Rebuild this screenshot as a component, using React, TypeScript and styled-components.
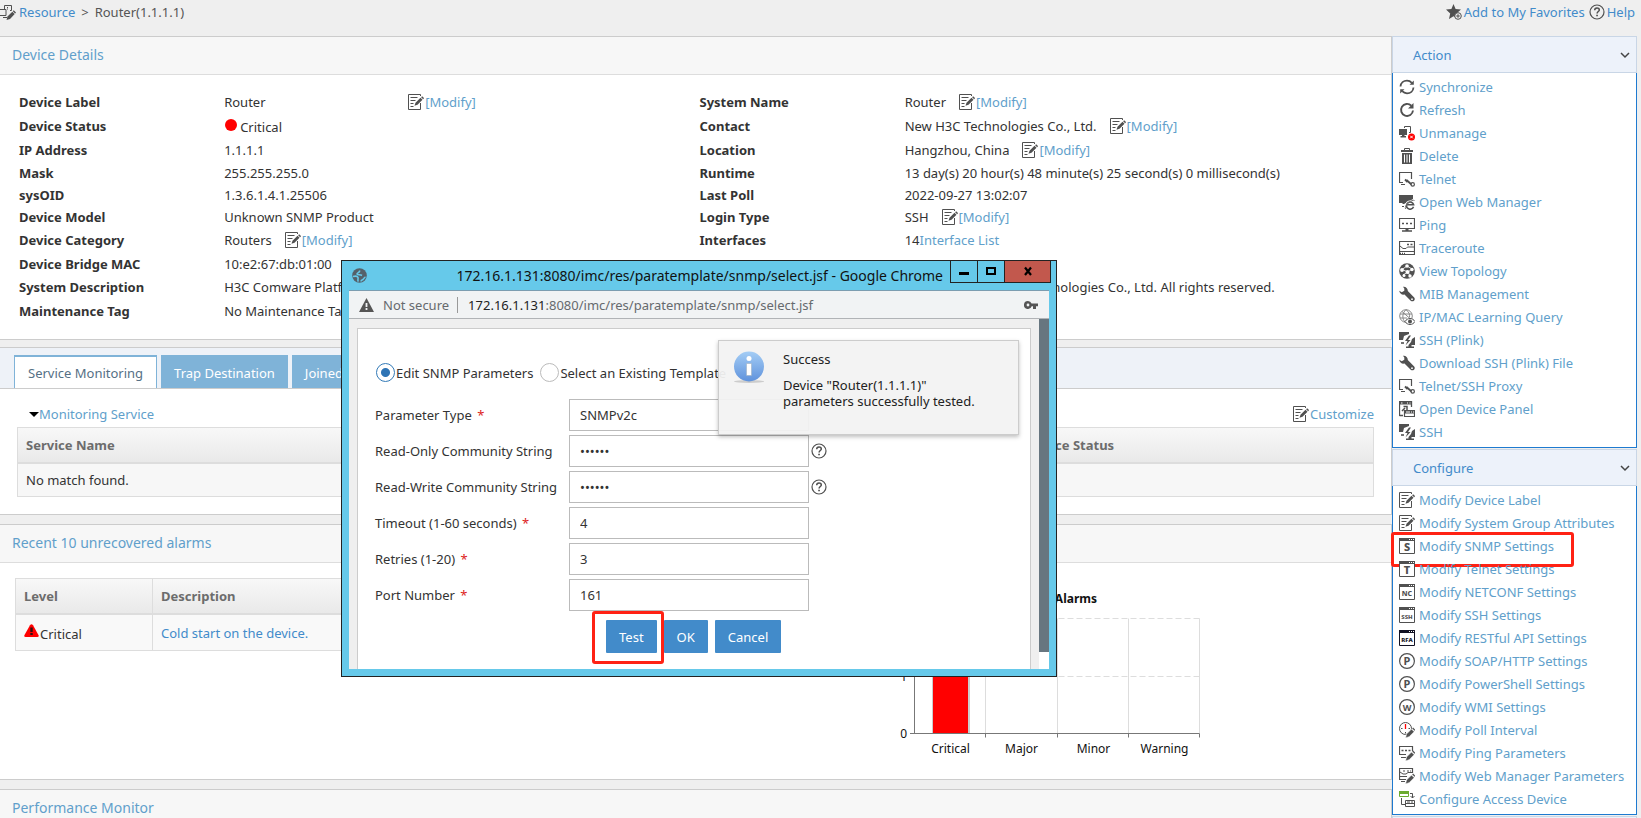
import React, { ReactNode } from 'react';
import styled, { createGlobalStyle, css } from 'styled-components';

const GlobalStyle = createGlobalStyle`
  *, *::before, *::after { box-sizing: border-box; }
  body {
    margin: 0;
    background: #efefef;
    color: #333;
    font: 13px/22px "Noto Sans", "Open Sans", sans-serif;
  }
  a { color: #619fcb; text-decoration: none; }
  button, input, select { font: inherit; color: inherit; }
`;

/* ---------- icons ---------- */

const INK = '#505050';

const Glyph = styled.svg`
  flex: none;
  width: 16px;
  height: 16px;
  display: block;
`;

const Icon = ({ children }: { children: ReactNode }) => (
  <Glyph viewBox="0 0 16 16" fill="none" stroke={INK} aria-hidden="true">
    {children}
  </Glyph>
);

const EditIcon = () => (
  <Icon>
    <path d="M12.5 2V.5H.5v15h12V9" />
    <path d="M2.500 3.500h7M2.500 6.500h5M2.500 9.500h3M2.500 12.500h3" />
    <path d="M6.500 11.800l1-3 5-5 2 2-5 5z" fill={INK} stroke="none" />
    <path d="M13.100 3.200l1-1 2 2-1 1z" fill={INK} stroke="none" />
  </Icon>
);

const CrumbIcon = () => (
  <Icon>
    <path d="M4.500 5V1.500h7v5H10M3 13.500h4M-2 5.500h8v6h-8z" />
    <path d="M7.500 4.500v1M7 3.500h1" />
    <path d="M6.500 16l1-3.500 4.800-4.800 2.400 2.400L10 15z" fill={INK} stroke="none" />
    <path d="M12.800 7.200l.9-.9 2.300 2.300-.9.9z" fill={INK} stroke="none" />
  </Icon>
);

const StarIcon = () => (
  <Icon>
    <path d="M7.500 0l2.100 5 5.400.4-4 3.500 1 3.600-1.600 1.600L7.500 12.300 3 15l1.200-5.500L0 5.500 5.400 5z" fill={INK} stroke="none" />
    <circle cx="12" cy="12" r="3.300" fill="#efefef" />
    <path d="M10.200 12h3.600M12 10.200v3.600" />
  </Icon>
);

const HelpIcon = () => (
  <Icon>
    <circle cx="8" cy="8" r="7" strokeWidth="1.200" />
    <path d="M5.700 6.200c0-1.500 1-2.300 2.300-2.300s2.300.8 2.300 2c0 1.600-2.200 1.700-2.200 3.600" strokeWidth="1.500" />
    <path d="M7.200 10.800h1.700v1.500H7.200z" fill={INK} stroke="none" />
  </Icon>
);

const SyncIcon = () => (
  <Icon>
    <path d="M1.500 7.500C1.800 4 4.600 1.700 8 1.700c2 0 3.600.8 4.800 2.100M14.500 8.500c-.3 3.500-3.100 5.800-6.500 5.800-2 0-3.600-.8-4.800-2.100" strokeWidth="1.800" />
    <path d="M14.800 1.500v4.300h-4.300zM1.200 14.500v-4.300h4.300z" fill={INK} stroke="none" />
  </Icon>
);

const RefreshIcon = () => (
  <Icon>
    <path d="M12.300 3.700A6 6 0 1 0 14 8.500" strokeWidth="1.900" />
    <path d="M14.500 1v5.500H9z" fill={INK} stroke="none" />
  </Icon>
);

const UnmanageIcon = () => (
  <Icon>
    <path d="M5.500 3V1.500h6v6H10" />
    <path d="M0 4h8v6H5.500v1H7v1.500H1.500V11H3v-1H0z" fill={INK} stroke="none" />
    <circle cx="12.500" cy="12" r="3.500" fill="#f00" stroke="none" />
    <path d="M11.200 10.700l2.600 2.600M13.800 10.700l-2.600 2.600" stroke="#fff" />
  </Icon>
);

const TrashIcon = () => (
  <Icon>
    <path d="M5.500 2.500v-2h5v2" />
    <path d="M2 2h12v2H2zM3 5h10v11H3z" fill={INK} stroke="none" />
    <path d="M5.500 6.500v8M8 6.500v8M10.500 6.500v8" stroke="#fff" />
  </Icon>
);

const TelnetIcon = () => (
  <Icon>
    <path d="M4 11.500H.5v-10h12V8M2 13.500h4" strokeWidth="1.200" />
    <path d="M6 8.500l2.500 2.500M7.500 9l5 4.500" strokeWidth="1.800" />
    <circle cx="13.700" cy="13.400" r="1.700" strokeWidth="1.200" />
  </Icon>
);

const WebIcon = () => (
  <Icon>
    <path d="M0 1h14v4L5 10H3.500V9H0z" fill={INK} stroke="none" />
    <path d="M3 12.500h2" />
    <circle cx="11" cy="11" r="4.600" fill="#fff" stroke="none" />
    <path d="M14.500 12.800A3.600 3.600 0 1 1 14.600 10.800H8" strokeWidth="1.600" />
    <path d="M15.500 6.500C13 5 5 11 6.500 15" stroke="#777" />
  </Icon>
);

const PingIcon = () => (
  <Icon>
    <path d="M.5 1.500h15v10H.5z" strokeWidth="1.200" />
    <path d="M3 6.500h2M7 6.500h2M11 6.500h2" strokeWidth="1.500" />
    <path d="M3 14h10M6.500 12.500h3" strokeWidth="1.500" />
  </Icon>
);

const TraceIcon = () => (
  <Icon>
    <path d="M.5 1.500h15v13H.5zM1 11.500h14" strokeWidth="1.200" />
    <path d="M1 6l3 2.500h3L8.500 7H15" />
    <path d="M8 4.500h2M11.500 4.500h2" strokeWidth="1.500" />
    <path d="M1 13.500h1M3 13.500h1M5 13.500h1" strokeWidth="1.500" />
  </Icon>
);

const TopologyIcon = () => (
  <Icon>
    <circle cx="8" cy="8" r="7.800" fill={INK} stroke="none" />
    <path d="M8 3l5 3-4 3 2 4M8 3L3 6.500l6 2.500-5 3" stroke="#fff" strokeWidth=".8" />
    <g fill="#fff" stroke="none">
      <circle cx="8" cy="3" r="1.800" />
      <circle cx="13" cy="6.500" r="1.700" />
      <circle cx="3" cy="7" r="1.900" />
      <circle cx="8.500" cy="9" r="2" />
      <circle cx="11" cy="13" r="1.700" />
      <circle cx="5" cy="12.500" r="1.500" />
    </g>
  </Icon>
);

const WrenchIcon = () => (
  <Icon>
    <path d="M4 .8c2.600-.5 5 1.500 4.800 4.200l6.400 6.500c1.800 2.500-1.300 5-3.500 3.300L5.500 8.600C3 9.200.5 7.500.2 4.800l2.600 1.500 2.500-1.500V2.500z" fill={INK} stroke="none" />
    <circle cx="13" cy="13.200" r=".9" fill="#fff" stroke="none" />
  </Icon>
);

const GlobeEyeIcon = () => (
  <Icon>
    <g stroke="#888">
      <circle cx="7" cy="7" r="6.300" />
      <path d="M1 5h12M1 9h7M7 .7C3 4 3 10 6 13M7 .7c3 2 4 5 3.500 7.500M3 2.500l8 7" />
    </g>
    <path d="M6 12.500c2.500-4 7.500-4 10 0-2.500 4-7.500 4-10 0z" fill="#fff" stroke={INK} />
    <circle cx="11" cy="12.500" r="2" fill={INK} stroke="none" />
  </Icon>
);

const SshIcon = () => (
  <Icon>
    <path d="M0 0h10v2L5 4 4 8H0z" fill={INK} stroke="none" />
    <path d="M2 11h3" strokeWidth="1.600" />
    <path d="M16 5v8h-3.500v1.500H15V16H7v-1.500h2.500V13L12 10l1-3z" fill={INK} stroke="none" />
    <path d="M10 3.500L6 9h2.500L6.500 13.500 11.500 8H9l3-4.500z" fill={INK} stroke="none" />
  </Icon>
);

const PanelIcon = () => (
  <Icon>
    <path d="M.5 15V.5h12V6M.5 14.500H4" strokeWidth="1.300" />
    <path d="M0 0h13v3.500H0z" fill={INK} stroke="none" />
    <path d="M2 2h1.500M8 2h1M10.500 2h1" stroke="#fff" />
    <path d="M3 10l3-3M4.500 5.500H8V9" strokeWidth="1.500" />
    <path d="M5.500 9.500h10v6h-10z" fill="#fff" strokeWidth="1.200" />
    <path d="M5 9h11v3.500H5z" fill={INK} stroke="none" />
    <path d="M7 11h4M12 11h1M14 11h1" stroke="#fff" />
  </Icon>
);

const SocketIcon = ({ text, size, ink = INK }: { text: string; size: number; ink?: string }) => (
  <Icon>
    <path d="M.5.500h15v15H.5z" stroke={ink} fill="#fff" />
    <path d="M0 0h16v3H0z" fill={ink} stroke="none" />
    <path d="M10 1.500h1M12 1.500h1M14 1.500h1" stroke="#fff" />
    <text x="8" y={size > 7 ? 13 : 12} fontSize={size} fontWeight="800" textAnchor="middle" fill={ink} stroke="none">
      {text}
    </text>
  </Icon>
);

const LetterIcon = ({ text }: { text: string }) => (
  <Icon>
    <circle cx="8" cy="8" r="7.400" strokeWidth="1.200" />
    <text x="8" y="11.800" fontSize={text === 'W' ? 9 : 11} fontWeight="700" textAnchor="middle" fill={INK} stroke="none">
      {text}
    </text>
  </Icon>
);

const Pencil = () => (
  <>
    <path d="M6.500 16l1-4 5-5 2.700 2.700-5 5z" fill={INK} stroke="#fff" strokeWidth=".6" />
    <path d="M13.200 6.500l.9-.9 2.300 2.300-.9.9z" fill={INK} stroke="none" />
  </>
);

const PollIcon = () => (
  <Icon>
    <circle cx="6.500" cy="6.500" r="6" />
    <path d="M6.500 2v5" stroke="#f00" strokeWidth="1.300" />
    <path d="M2 6.500h1.500M9.500 6.500H11M6.500 10v1.500" />
    <Pencil />
  </Icon>
);

const PingEditIcon = () => (
  <Icon>
    <path d="M7 9.500H.5v-8h13V6M2 12.500h5" strokeWidth="1.200" />
    <path d="M2.500 5.500h2M6 5.500h2M9.500 5.500h2" strokeWidth="1.500" />
    <Pencil />
  </Icon>
);

const WebEditIcon = () => (
  <Icon>
    <path d="M7 11.500H.5V.5h13V5M1 8.500h7M2 13.500h4" strokeWidth="1.200" />
    <path d="M1 4l3 2h3l2-1.500h4M4 3h2M8 3h2M11 3h1" />
    <Pencil />
  </Icon>
);

const AccessIcon = () => (
  <Icon>
    <path d="M.5.500h9v5h-9z" stroke="#6cab2f" />
    <path d="M0 0h10v3H0z" fill="#6cab2f" stroke="none" />
    <path d="M2.500 7v6.500H6M11 2.500h2.500V7M11.500 5l2 2 2-2" />
    <path d="M6.500 9.500h9v6h-9zM6.500 12.500h9M8 11h3M12 11h2" />
  </Icon>
);

const Chevron = () => (
  <Glyph viewBox="0 0 16 16" fill="none" stroke="#444" strokeWidth="1.500" aria-hidden="true">
    <path d="M4 6l4 4 4-4" />
  </Glyph>
);

/* ---------- page frame ---------- */

const Page = styled.div`
  position: relative;
  height: 100vh;
  overflow: hidden;
`;

const TopBar = styled.header`
  display: flex;
  justify-content: space-between;
  height: 36px;
  padding-right: 6px;
  color: #555;
  a { color: #428bca; }
`;

const TopGroup = styled.nav`
  display: flex;
  align-items: center;
  height: 24px;
`;

const IconLink = styled.a`
  display: inline-flex;
  align-items: center;
  ${Glyph} { margin-right: 1px; }
`;

const Crumb = styled(IconLink)`
  ${Glyph} { margin-right: 3px; }
`;

const TopLink = styled(IconLink)`
  margin-left: 4px;
  ${Glyph} { margin-right: 2px; }
`;

const CrumbSep = styled.span`
  margin: 0 6px;
`;

const Columns = styled.div`
  display: flex;
  align-items: flex-start;
  padding-right: 4px;
`;

const Main = styled.main`
  flex: 1;
  min-width: 0;
`;

const Panel = styled.section<{ $gap?: number }>`
  background: #fff;
  border: solid #ccc;
  border-width: 1px 1px 1px 0;
  margin-bottom: ${p => p.$gap ?? 9}px;
`;

const PanelTitle = styled.h2`
  margin: 0;
  padding: 4px 12px 0;
  height: 38px;
  background: #f7f7f7;
  border-bottom: 1px solid #ddd;
  color: #619fcb;
  font-size: 14px;
  font-weight: 400;
  line-height: 28px;
`;

/* ---------- device details ---------- */

const DetailsBody = styled.div`
  padding: 15px 11px 16px 19px;
`;

const DetailsTable = styled.table`
  width: 100%;
  table-layout: fixed;
  border-collapse: collapse;
  th, td { padding: 0; text-align: left; white-space: nowrap; }
  td { padding-left: 1px; }
  th { font-weight: 700; }
`;

const DetailRow = styled.tr<{ $h?: number }>`
  height: ${p => p.$h ?? 22}px;
`;

const Value = styled.div<{ $wide?: boolean }>`
  display: flex;
  align-items: center;
  gap: 13px;
  span { min-width: ${p => (p.$wide ? '171px' : '0')}; }
`;

const StatusValue = styled.div`
  display: flex;
  align-items: center;
  gap: 3px;
  padding-top: 2px;
`;

const StatusDot = styled.i`
  width: 12px;
  height: 12px;
  margin: -5px 0 0 1px;
  border-radius: 50%;
  background: #f00;
`;

const Modify = ({ what }: { what: string }) => (
  <IconLink href="#modify" aria-label={`Modify ${what}`}>
    <EditIcon />
    [Modify]
  </IconLink>
);

const Details = () => (
  <Panel $gap={7}>
    <PanelTitle>Device Details</PanelTitle>
    <DetailsBody>
      <DetailsTable>
        <colgroup>
          <col width="15%" />
          <col width="35%" />
          <col width="15%" />
          <col width="35%" />
        </colgroup>
        <tbody>
          <DetailRow $h={24}>
            <th>Device Label</th>
            <td><Value $wide><span>Router</span><Modify what="label" /></Value></td>
            <th>System Name</th>
            <td><Value><span>Router</span><Modify what="name" /></Value></td>
          </DetailRow>
          <DetailRow $h={24}>
            <th>Device Status</th>
            <td><StatusValue><StatusDot />Critical</StatusValue></td>
            <th>Contact</th>
            <td><Value><span>New H3C Technologies Co., Ltd.</span><Modify what="contact" /></Value></td>
          </DetailRow>
          <DetailRow $h={24}>
            <th>IP Address</th>
            <td>1.1.1.1</td>
            <th>Location</th>
            <td><Value><span>Hangzhou, China</span><Modify what="location" /></Value></td>
          </DetailRow>
          <DetailRow>
            <th>Mask</th>
            <td>255.255.255.0</td>
            <th>Runtime</th>
            <td>13 day(s) 20 hour(s) 48 minute(s) 25 second(s) 0 millisecond(s)</td>
          </DetailRow>
          <DetailRow>
            <th>sysOID</th>
            <td>1.3.6.1.4.1.25506</td>
            <th>Last Poll</th>
            <td>2022-09-27 13:02:07</td>
          </DetailRow>
          <DetailRow>
            <th>Device Model</th>
            <td>Unknown SNMP Product</td>
            <th>Login Type</th>
            <td><Value><span>SSH</span><Modify what="login type" /></Value></td>
          </DetailRow>
          <DetailRow $h={24}>
            <th>Device Category</th>
            <td><Value><span>Routers</span><Modify what="category" /></Value></td>
            <th>Interfaces</th>
            <td>14<a href="#interfaces">Interface List</a></td>
          </DetailRow>
          <DetailRow $h={23}>
            <th>Device Bridge MAC</th>
            <td colSpan={3}>10:e2:67:db:01:00</td>
          </DetailRow>
          <DetailRow $h={24}>
            <th>System Description</th>
            <td colSpan={3}>
              H3C Comware Platform Software, Software Version 7.1.064, Release 0427P22 H3C Router SR6602 Copyright (c) 2004-2021 New H3C Technologies Co., Ltd. All rights reserved.
            </td>
          </DetailRow>
          <DetailRow $h={24}>
            <th>Maintenance Tag</th>
            <td colSpan={3}>No Maintenance Tag</td>
          </DetailRow>
        </tbody>
      </DetailsTable>
    </DetailsBody>
  </Panel>
);

/* ---------- service monitoring ---------- */

const TabBar = styled.div`
  display: flex;
  gap: 4px;
  height: 41px;
  padding: 7px 14px 0;
  background: #eef2f8;
  border-bottom: 1px solid #ccc;
`;

const Tab = styled.button<{ $active?: boolean }>`
  padding: 0 13px;
  border: 0;
  border-top: 2px solid #7fb3d8;
  background: #7fb3d8;
  color: #fff;
  ${p => p.$active && css`
    border: solid #7fb3d8;
    border-width: 2px 1px 0;
    background: #fff;
    color: #557085;
  `}
`;

const MonitorBody = styled.div`
  padding: 14px 17px 17px;
`;

const MonitorHead = styled.div`
  display: flex;
  justify-content: space-between;
  align-items: flex-start;
  height: 24px;
  padding-left: 12px;
`;

const Toggle = styled.button`
  display: flex;
  align-items: center;
  height: 22px;
  padding: 0;
  border: 0;
  background: none;
  color: #619fcb;
  &::before {
    content: "";
    border: 5px solid transparent;
    border-top-color: #000;
    border-bottom-width: 0;
  }
`;

const DataTable = styled.table`
  width: 100%;
  table-layout: fixed;
  border-collapse: separate;
  border-spacing: 0;
  border: solid #ddd;
  border-width: 1px 1px 1px 0;
  th, td {
    padding: 0 8px;
    text-align: left;
    border-left: 1px solid #ddd;
  }
  th {
    height: 36px;
    color: #6c6c6c;
    font-weight: 700;
    background: linear-gradient(#f8f8f8, #e9e9e9);
    border-bottom: 2px solid #ddd;
  }
  td { height: 32px; background: #f7f7f7; }
`;

const MergedTable = styled(DataTable)`
  th + th { border-left: 0; }
`;

const Monitoring = () => (
  <Panel>
    <TabBar role="tablist">
      <Tab $active role="tab" aria-selected="true">Service Monitoring</Tab>
      <Tab role="tab">Trap Destination</Tab>
      <Tab role="tab">Joined Services</Tab>
    </TabBar>
    <MonitorBody>
      <MonitorHead>
        <Toggle>Monitoring Service</Toggle>
        <IconLink href="#customize"><EditIcon />Customize</IconLink>
      </MonitorHead>
      <MergedTable>
        <colgroup>
          <col width="73.6%" />
          <col width="26.4%" />
        </colgroup>
        <thead>
          <tr><th>Service Name</th><th>Service Status</th></tr>
        </thead>
        <tbody>
          <tr><td colSpan={2}>No match found.</td></tr>
        </tbody>
      </MergedTable>
    </MonitorBody>
  </Panel>
);

/* ---------- alarms ---------- */

const AlarmsBody = styled.div`
  display: grid;
  grid-template-columns: 55% 45%;
  height: 216px;
  padding: 15px 15px 0;
`;

const AlarmLevel = styled.div`
  display: flex;
  align-items: center;
  gap: 1px;
  padding-top: 2px;
`;

const WarnSvg = styled.svg`
  width: 15px;
  height: 13px;
  margin-top: -6px;
`;

const AlarmTable = styled(DataTable)`
  align-self: start;
  td { height: 35px; background: #f9f9f9; }
  td a { color: #428bca; }
`;

const ChartSvg = styled.svg`
  justify-self: start;
  width: 360px;
  height: 200px;
  margin-left: 124px;
  text { font-size: 12px; fill: #111; }
`;

const CHART_LEFT = 26;
const CHART_BASE = 155;
const CATEGORIES = ['Critical', 'Major', 'Minor', 'Warning'];
const gridX = (i: number) => CHART_LEFT + 0.5 + Math.round(i * 71.3);

const AlarmChart = () => (
  <ChartSvg viewBox="0 0 360 200" role="img" aria-label="Alarms by level">
    <text x="209" y="25" textAnchor="end" fontWeight="700">Unrecovered Alarms</text>
    <g stroke="#ddd" strokeDasharray="6 3">
      <path d={`M26.500 40.500H${gridX(4)}M26.500 98.500H${gridX(4)}`} />
    </g>
    <path d={[1, 2, 3, 4].map(i => `M${gridX(i)} 40.500V155`).join('')} stroke="#ddd" />
    <rect x="44" y="98" width="38" height="57" fill="#ccc" />
    <rect x="45" y="98" width="35" height="57" fill="#f00" />
    <path
      d={`M26.500 40.500V155.500M22 ${CHART_BASE + 0.5}H${gridX(4)}` + [1, 2, 3, 4].map(i => `M${gridX(i)} 155.500v4`).join('')}
      stroke="#777"
    />
    {[0, 1, 2].map(v => (
      <text key={v} x="19" y={160 - v * 57} textAnchor="end">{v}</text>
    ))}
    {CATEGORIES.map((c, i) => (
      <text key={c} x={gridX(i) + 36} y="175" textAnchor="middle">{c}</text>
    ))}
  </ChartSvg>
);

const Alarms = () => (
  <Panel>
    <PanelTitle>Recent 10 unrecovered alarms</PanelTitle>
    <AlarmsBody>
      <AlarmTable>
        <colgroup>
          <col width="137" />
          <col />
        </colgroup>
        <thead>
          <tr><th>Level</th><th>Description</th></tr>
        </thead>
        <tbody>
          <tr>
            <td>
              <AlarmLevel>
                <WarnSvg viewBox="0 0 15 13" aria-hidden="true">
                  <path d="M6 1.200q1.500-2 3 0l5.600 10q.6 1.800-1.200 1.800H1.600Q-.2 13 .4 11.200z" fill="#f00" />
                  <path d="M6.300 3.500h2.400v4.500H6.300zM6.300 9h2.400v2H6.300z" fill="#311" />
                </WarnSvg>
                Critical
              </AlarmLevel>
            </td>
            <td><a href="#alarm">Cold start on the device.</a></td>
          </tr>
        </tbody>
      </AlarmTable>
      <AlarmChart />
    </AlarmsBody>
  </Panel>
);

/* ---------- sidebar ---------- */

const Sidebar = styled.aside`
  display: flex;
  flex-direction: column;
  gap: 1px;
  width: 245px;
`;

const SideTitle = styled.button`
  display: flex;
  justify-content: space-between;
  align-items: center;
  width: 100%;
  height: 37px;
  padding: 0 3px 0 20px;
  border: 1px solid #c9d6e6;
  background: #edf2fa;
  color: #428bca;
`;

const SideList = styled.ul`
  margin: 0;
  padding: 2px 0 4px 6px;
  border: solid #1e7ad0;
  border-width: 0 1px 1px;
  background: #fff;
  list-style: none;
`;

const SideEnd = styled.div`
  height: 37px;
  border: 1px solid #c9d6e6;
  background: #edf2fa;
`;

const SideLink = styled.a`
  display: flex;
  align-items: center;
  gap: 4px;
  height: 23px;
  white-space: nowrap;
`;

const Highlight = styled.div`
  position: absolute;
  inset: -2px auto -10px -8px;
  width: 183px;
  border: 3px solid #ff2214;
  border-radius: 3px;
  pointer-events: none;
`;

const SideItem = styled.li`
  position: relative;
`;

type Entry = [ReactNode, string, boolean?];

const ACTIONS: Entry[] = [
  [<SyncIcon />, 'Synchronize'],
  [<RefreshIcon />, 'Refresh'],
  [<UnmanageIcon />, 'Unmanage'],
  [<TrashIcon />, 'Delete'],
  [<TelnetIcon />, 'Telnet'],
  [<WebIcon />, 'Open Web Manager'],
  [<PingIcon />, 'Ping'],
  [<TraceIcon />, 'Traceroute'],
  [<TopologyIcon />, 'View Topology'],
  [<WrenchIcon />, 'MIB Management'],
  [<GlobeEyeIcon />, 'IP/MAC Learning Query'],
  [<SshIcon />, 'SSH (Plink)'],
  [<WrenchIcon />, 'Download SSH (Plink) File'],
  [<TelnetIcon />, 'Telnet/SSH Proxy'],
  [<PanelIcon />, 'Open Device Panel'],
  [<SshIcon />, 'SSH'],
];

const CONFIGURE: Entry[] = [
  [<EditIcon />, 'Modify Device Label'],
  [<EditIcon />, 'Modify System Group Attributes'],
  [<SocketIcon text="S" size={11} />, 'Modify SNMP Settings', true],
  [<SocketIcon text="T" size={11} />, 'Modify Telnet Settings'],
  [<SocketIcon text="NC" size={7} />, 'Modify NETCONF Settings'],
  [<SocketIcon text="SSH" size={6} />, 'Modify SSH Settings'],
  [<SocketIcon text="RFA" size={6} ink="#112" />, 'Modify RESTful API Settings'],
  [<LetterIcon text="P" />, 'Modify SOAP/HTTP Settings'],
  [<LetterIcon text="P" />, 'Modify PowerShell Settings'],
  [<LetterIcon text="W" />, 'Modify WMI Settings'],
  [<PollIcon />, 'Modify Poll Interval'],
  [<PingEditIcon />, 'Modify Ping Parameters'],
  [<WebEditIcon />, 'Modify Web Manager Parameters'],
  [<AccessIcon />, 'Configure Access Device'],
];

const SideSection = ({ title, entries }: { title: string; entries: Entry[] }) => (
  <section>
    <SideTitle>{title}<Chevron /></SideTitle>
    <SideList>
      {entries.map(([icon, label, marked]) => (
        <SideItem key={label}>
          <SideLink href="#action">{icon}{label}</SideLink>
          {marked && <Highlight />}
        </SideItem>
      ))}
    </SideList>
  </section>
);

/* ---------- popup window ---------- */

const Window = styled.div`
  position: absolute;
  left: 341px;
  top: 260px;
  width: 716px;
  height: 417px;
  display: flex;
  flex-direction: column;
  padding: 0 7px 7px;
  border: 1px solid #222;
  background: #66c9ea;
`;

const TitleBar = styled.div`
  display: flex;
  align-items: flex-start;
  height: 29px;
  margin-right: -2px;
  color: #111;
  font-size: 14px;
  line-height: 30px;
`;

const TitleGlobe = styled.svg`
  width: 15px;
  height: 15px;
  margin: 7px 0 0 3px;
`;

const TitleText = styled.div`
  flex: 1;
  padding-right: 7px;
  text-align: right;
  white-space: nowrap;
`;

const WinButton = styled.button<{ $close?: boolean }>`
  display: grid;
  place-items: center;
  width: ${p => (p.$close ? 47 : 28)}px;
  height: 22px;
  margin-right: -1px;
  padding: 0 0 1px;
  border: 1px solid #222;
  border-top: 0;
  background: ${p => (p.$close ? '#c2584d' : 'transparent')};
  svg { width: 10px; height: 10px; display: block; }
  &:last-child { margin-right: 0; }
`;

const AddressBar = styled.div`
  display: flex;
  align-items: center;
  height: 29px;
  padding: 0 10px;
  border-top: 1px solid #7c9db0;
  border-bottom: 1px solid #b0b3b6;
  background: #f1f3f4;
  color: #666a6e;
  svg { width: 15px; height: 14px; }
  b { color: #222; font-weight: 400; }
`;

const SecureNote = styled.span`
  margin: 0 10px 0 9px;
  padding-right: 8px;
  border-right: 1px solid #999;
  line-height: 16px;
`;

const Spacer = styled.div`
  flex: 1;
`;

const Viewport = styled.div`
  flex: 1;
  display: flex;
  gap: 8px;
  min-height: 0;
  padding-left: 8px;
  background: #efefef;
`;

const ScrollTrack = styled.div`
  width: 10px;
  padding-bottom: 17px;
  background: #fff;
  &::before {
    content: "";
    display: block;
    height: 100%;
    background: #677680;
  }
`;

const FormPane = styled.form`
  flex: 1;
  margin-top: 9px;
  padding: 33px 17px 0;
  border: 1px solid #ccc;
  border-bottom: 0;
  background: #fff;
`;

const ModeRow = styled.div`
  display: flex;
  align-items: center;
  gap: 7px;
  height: 21px;
  margin-bottom: 16px;
  padding-left: 1px;
  label { display: flex; align-items: center; gap: 1px; white-space: nowrap; }
`;

const Radio = styled.input`
  appearance: none;
  width: 19px;
  height: 19px;
  margin: 0;
  border: 1px solid #bbb;
  border-radius: 50%;
  background: #fff;
  &:checked {
    border-color: #337ab7;
    background: radial-gradient(circle, #2f74b5 4px, #fff 5px);
  }
`;

const Field = styled.div`
  display: flex;
  align-items: center;
  height: 32px;
  margin-bottom: 4px;
  > label { width: 194px; white-space: nowrap; }
  > ${Glyph} { margin-left: 2px; }
`;

const Required = styled.span`
  margin-left: 2px;
  color: #d22;
`;

const fieldBox = css`
  width: 240px;
  height: 32px;
  padding: 0 10px;
  border: 1px solid #bbb;
  border-radius: 0;
  background: #fff;
`;

const TextInput = styled.input`
  ${fieldBox}
`;

const Select = styled.select`
  ${fieldBox}
  appearance: none;
`;

const ButtonRow = styled.div`
  display: flex;
  gap: 7px;
  margin: 9px 0 0 231px;
`;

const FormButton = styled.button`
  position: relative;
  height: 33px;
  padding: 0 13px;
  border: 0;
  border-radius: 1px;
  background: #428bca;
  color: #fff;
`;

const ButtonMark = styled.span`
  position: absolute;
  inset: -9px -7px -11px -14px;
  border: 3px solid #ff2214;
  border-radius: 3px;
  pointer-events: none;
`;

const Toast = styled.div`
  position: absolute;
  left: 376px;
  top: 79px;
  display: flex;
  gap: 18px;
  width: 301px;
  height: 95px;
  padding: 8px 14px;
  border: 1px solid #ccc;
  background: rgba(242, 242, 242, 0.94);
  box-shadow: 0 2px 4px rgba(0, 0, 0, 0.25);
  color: #222;
  p { margin: 2px 0 10px; line-height: 16px; }
`;

const InfoSvg = styled.svg`
  width: 32px;
  height: 36px;
`;

type FieldSpec = { id: string; label: string; value: string; required?: boolean; secret?: boolean };

const FIELDS: FieldSpec[] = [
  { id: 'ro', label: 'Read-Only Community String', value: 'public', secret: true },
  { id: 'rw', label: 'Read-Write Community String', value: 'public', secret: true },
  { id: 'timeout', label: 'Timeout (1-60 seconds)', value: '4', required: true },
  { id: 'retries', label: 'Retries (1-20)', value: '3', required: true },
  { id: 'port', label: 'Port Number', value: '161', required: true },
];

const SnmpWindow = () => (
  <Window role="dialog" aria-label="SNMP parameters">
    <TitleBar>
      <TitleGlobe viewBox="0 0 15 15" aria-hidden="true">
        <circle cx="7.500" cy="7.500" r="7.300" fill="#55616a" />
        <path d="M7.500 2.500c1 2-2.500 2-2.500 3.500 0 1 3.500.5 5 1.500M1 8.500c2-.5 4.500-.5 5 1s-1 3 .5 4M9 13.500c0-1.500 1-1.500 2-2s1-2 2.500-2.500" fill="none" stroke="#66c9ea" strokeWidth="1.600" />
      </TitleGlobe>
      <TitleText>172.16.1.131:8080/imc/res/paratemplate/snmp/select.jsf - Google Chrome</TitleText>
      <WinButton aria-label="Minimize">
        <svg viewBox="0 0 10 10"><path d="M0 6h10v3H0z" /></svg>
      </WinButton>
      <WinButton aria-label="Maximize">
        <svg viewBox="0 0 10 10"><path d="M1 2h8v6H1z" fill="none" stroke="#000" strokeWidth="2" /></svg>
      </WinButton>
      <WinButton $close aria-label="Close">
        <svg viewBox="0 0 10 10"><path d="M2 1.500l6 7.500M8 1.500L2 9" stroke="#000" strokeWidth="2.200" /></svg>
      </WinButton>
    </TitleBar>
    <AddressBar>
      <svg viewBox="0 0 15 14" aria-hidden="true">
        <path d="M7.500 0L15 14H0z" fill="#555" />
        <path d="M6.600 5h1.800v4H6.600zM6.600 10h1.800v2H6.600z" fill="#f1f3f4" />
      </svg>
      <SecureNote>Not secure</SecureNote>
      <span><b>172.16.1.131</b>:8080/imc/res/paratemplate/snmp/select.jsf</span>
      <Spacer />
      <svg viewBox="0 0 15 14" aria-label="Saved password">
        <path d="M4 3a4 4 0 1 0 3.700 5.300H9V11h3V8.300h2V5.500H7.600A4 4 0 0 0 4 3zm0 2.600a1.400 1.400 0 1 1 0 2.800 1.400 1.400 0 0 1 0-2.800z" fill="#555" fillRule="evenodd" />
      </svg>
    </AddressBar>
    <Viewport>
      <FormPane onSubmit={e => e.preventDefault()}>
        <ModeRow>
          <label><Radio type="radio" name="mode" defaultChecked />Edit SNMP Parameters</label>
          <label><Radio type="radio" name="mode" />Select an Existing Template</label>
        </ModeRow>
        <Field>
          <label htmlFor="ptype">Parameter Type <Required>*</Required></label>
          <Select id="ptype" defaultValue="SNMPv2c">
            <option>SNMPv2c</option>
          </Select>
        </Field>
        {FIELDS.map(f => (
          <Field key={f.id}>
            <label htmlFor={f.id}>{f.label} {f.required && <Required>*</Required>}</label>
            <TextInput id={f.id} type={f.secret ? 'password' : 'text'} defaultValue={f.value} />
            {f.secret && <HelpIcon />}
          </Field>
        ))}
        <ButtonRow>
          <FormButton>Test<ButtonMark /></FormButton>
          <FormButton>OK</FormButton>
          <FormButton>Cancel</FormButton>
        </ButtonRow>
      </FormPane>
      <ScrollTrack />
    </Viewport>
    <Toast role="status">
      <InfoSvg viewBox="0 0 32 36" aria-hidden="true">
        <defs>
          <linearGradient id="info" x1="0" y1="0" x2="0" y2="1">
            <stop offset="0" stopColor="#a4cdf5" />
            <stop offset="1" stopColor="#5f92dc" />
          </linearGradient>
        </defs>
        <ellipse cx="16" cy="32.500" rx="15" ry="1.500" fill="#ccc" />
        <circle cx="16" cy="17.500" r="15" fill="url(#info)" />
        <circle cx="16" cy="9.500" r="2.500" fill="#fff" />
        <path d="M13.500 14.500h5v12h-5z" fill="#fff" stroke="#9ab" strokeWidth=".5" />
      </InfoSvg>
      <div>
        <p>Success</p>
        <p>Device "Router(1.1.1.1)"<br />parameters successfully tested.</p>
      </div>
    </Toast>
  </Window>
);

export default function App() {
  return (
    <Page>
      <GlobalStyle />
      <TopBar>
        <TopGroup>
          <Crumb href="#resource"><CrumbIcon />Resource</Crumb>
          <CrumbSep>&gt;</CrumbSep>
          <span>Router(1.1.1.1)</span>
        </TopGroup>
        <TopGroup>
          <TopLink href="#favorites"><StarIcon />Add to My Favorites</TopLink>
          <TopLink href="#help"><HelpIcon />Help</TopLink>
        </TopGroup>
      </TopBar>
      <Columns>
        <Main>
          <Details />
          <Monitoring />
          <Alarms />
          <Panel>
            <PanelTitle>Performance Monitor</PanelTitle>
          </Panel>
        </Main>
        <Sidebar>
          <SideSection title="Action" entries={ACTIONS} />
          <SideSection title="Configure" entries={CONFIGURE} />
          <SideEnd />
        </Sidebar>
      </Columns>
      <SnmpWindow />
    </Page>
  );
}
